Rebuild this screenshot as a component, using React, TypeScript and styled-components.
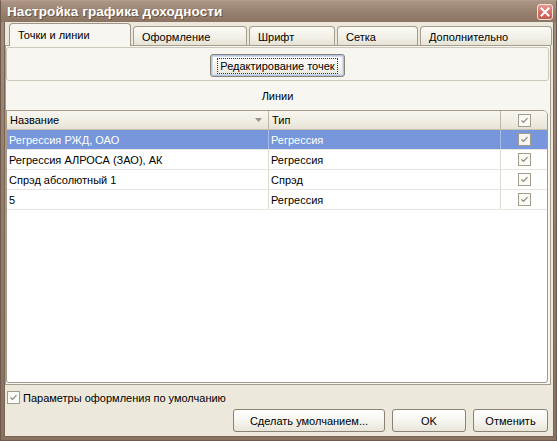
import React from "react";
import styled, { createGlobalStyle, css } from "styled-components";

const Global = createGlobalStyle`
  html, body { margin: 0; padding: 0; background: #ffffff; }
  body { font-family: "Liberation Sans", Arial, sans-serif; font-size: 11px; color: #000; }
  * { box-sizing: border-box; }
`;

const Window = styled.div`
  width: 557px;
  height: 441px;
  display: flex;
  flex-direction: column;
  background: linear-gradient(180deg, #a58d7d 0%, #957d6c 40%, #8a7261 100%);
  border: 1px solid #6e5a4c;
  border-top-color: #b49c8c;
`;

const TitleBar = styled.div`
  height: 21px;
  display: flex;
  align-items: center;
  justify-content: space-between;
  padding: 0 3px 0 6px;
  background: linear-gradient(180deg, #ad9585 0%, #9b8372 45%, #8c7463 100%);
`;

const Title = styled.div`
  font-family: "Liberation Sans", Arial, sans-serif;
  font-weight: bold;
  font-size: 13.5px;
  color: #ffffff;
  text-shadow: 1px 1px 0 #6a5444;
  letter-spacing: 0.1px;
`;

const CloseButton = styled.div`
  width: 16px;
  height: 16px;
  margin-top: 1px;
  border-radius: 3px;
  border: 1px solid #f4e4e0;
  background: linear-gradient(180deg, #e89a92 0%, #d6685e 60%, #c85a50 100%);
  display: flex;
  align-items: center;
  justify-content: center;
`;

const Body = styled.div`
  flex: 1;
  margin: 0 2px 3px 3px;
  background: #ece9dc;
  display: flex;
  flex-direction: column;
  border: 1px solid #7a6555;
  border-top: none;
`;

const TabStrip = styled.div`
  height: 23px;
  display: flex;
  align-items: flex-end;
  padding: 2px 0 0 4px;
  gap: 2px;
  position: relative;
  z-index: 1;
`;

const Tab = styled.div<{ $w: number; $active?: boolean }>`
  width: ${(p) => p.$w}px;
  height: 19px;
  padding: 4px 0 0 8px;
  border: 1px solid #a49c8c;
  border-bottom: none;
  border-radius: 4px 4px 0 0;
  background: linear-gradient(180deg, #fbfaf6 0%, #f1efe6 60%, #e6e2d4 100%);
  color: #000;
  ${(p) =>
    p.$active &&
    css`
      height: 23px;
      margin-bottom: -1px;
      padding-top: 5px;
      background: #f7f6f1;
      border-color: #9e9686;
    `}
`;

const Panel = styled.div`
  height: 340px;
  margin: 0 2px 0 0;
  border: 1px solid #a49c8c;
  background: #f7f6f1;
  display: flex;
  flex-direction: column;
  padding: 1px 1px 1px 0;
`;

const TopBox = styled.div`
  height: 34px;
  border: 1px solid #cbc7bb;
  border-radius: 3px;
  background: #f6f5f0;
  display: flex;
  justify-content: center;
  padding-top: 6px;
`;

const Button = styled.div<{ $w: number; $focus?: boolean }>`
  width: ${(p) => p.$w}px;
  height: 23px;
  border: 1px solid #8b8273;
  border-radius: 3px;
  background: linear-gradient(180deg, #ffffff 0%, #f6f5f0 50%, #e8e5d9 100%);
  display: flex;
  align-items: center;
  justify-content: center;
  color: #000;
  ${(p) =>
    p.$focus &&
    css`
      box-shadow: inset 0 0 0 1px #b0c4e6, inset 0 0 0 2px #d0dcf0;
    `}
`;

const FocusText = styled.span`
  outline: 1px dotted #333;
  outline-offset: 1px;
  padding: 0 1px;
`;

const SectionLabel = styled.div`
  height: 29px;
  display: flex;
  align-items: center;
  justify-content: center;
  padding-top: 1px;
`;

const Grid = styled.div`
  flex: 1;
  margin-right: 1px;
  border: 1px solid #a5998a;
  border-radius: 0 5px 3px 3px;
  background: #ffffff;
  overflow: hidden;
`;

const Row = styled.div<{ $header?: boolean; $selected?: boolean }>`
  display: grid;
  grid-template-columns: 262px 232px 1fr;
  height: 20px;
  border-bottom: 1px solid #e6e4dc;
  ${(p) =>
    p.$header &&
    css`
      height: 19px;
      background: linear-gradient(180deg, #f8f6ef 0%, #efece2 60%, #e6e2d5 100%);
      border-bottom: 1px solid #c8c1b0;
    `}
  ${(p) =>
    p.$selected &&
    css`
      background: #7896dc;
      color: #ffffff;
    `}
`;

const Cell = styled.div<{ $header?: boolean; $selected?: boolean; $center?: boolean; $last?: boolean }>`
  display: flex;
  align-items: center;
  padding-left: ${(p) => (p.$header ? 3 : 2)}px;
  border-right: ${(p) => (p.$last ? "none" : `1px solid ${p.$header ? "#bdb5a4" : p.$selected ? "#a9bbe8" : "#dcd9cf"}`)};
  white-space: nowrap;
  overflow: hidden;
  ${(p) =>
    p.$center &&
    css`
      justify-content: center;
      padding-left: 0;
    `}
`;

const HeaderLabel = styled.span`
  flex: 1;
`;

const SortArrow = styled.svg`
  width: 7px;
  height: 4px;
  margin-right: 6px;
`;

const CheckSvg = styled.svg`
  width: 13px;
  height: 13px;
  display: block;
`;

const Footer = styled.div`
  display: flex;
  flex-direction: column;
  padding: 6px 5px 0 2px;
`;

const CheckRow = styled.div`
  height: 13px;
  display: flex;
  align-items: center;
  gap: 3px;
`;

const ButtonRow = styled.div`
  display: flex;
  justify-content: flex-end;
  margin-top: 5px;
  gap: 7px;
`;

const Check: React.FC<{ selected?: boolean }> = ({ selected }) => (
  <CheckSvg viewBox="0 0 13 13">
    <rect x="0.5" y="0.5" width="12" height="12" fill={selected ? "#f4f4f0" : "#fbfbf8"} stroke="#a39c8c" />
    <path d="M3.5 6.5 L5.5 8.5 L9.5 4.2" fill="none" stroke="#8c877c" strokeWidth="1.2" />
  </CheckSvg>
);

const rows = [
  { name: "Регрессия РЖД, ОАО", type: "Регрессия", selected: true },
  { name: "Регрессия АЛРОСА (ЗАО), АК", type: "Регрессия" },
  { name: "Спрэд абсолютный 1", type: "Спрэд" },
  { name: "5", type: "Регрессия" },
];

const tabs = [
  { label: "Точки и линии", w: 122, active: true },
  { label: "Оформление", w: 114 },
  { label: "Шрифт", w: 86 },
  { label: "Сетка", w: 81 },
  { label: "Дополнительно", w: 132 },
];

export default function App() {
  return (
    <>
      <Global />
      <Window>
        <TitleBar>
          <Title>Настройка графика доходности</Title>
          <CloseButton>
            <svg width="10" height="10" viewBox="0 0 10 10">
              <path d="M1.5 1.5 L8.5 8.5 M8.5 1.5 L1.5 8.5" stroke="#ffffff" strokeWidth="2" strokeLinecap="square" />
            </svg>
          </CloseButton>
        </TitleBar>
        <Body>
          <TabStrip>
            {tabs.map((t) => (
              <Tab key={t.label} $w={t.w} $active={t.active}>
                {t.label}
              </Tab>
            ))}
          </TabStrip>
          <Panel>
            <TopBox>
              <Button $w={135} $focus>
                <FocusText>Редактирование точек</FocusText>
              </Button>
            </TopBox>
            <SectionLabel>Линии</SectionLabel>
            <Grid>
              <Row $header>
                <Cell $header>
                  <HeaderLabel>Название</HeaderLabel>
                  <SortArrow viewBox="0 0 7 4">
                    <path d="M0 0 L7 0 L3.5 4 Z" fill="#9a958a" />
                  </SortArrow>
                </Cell>
                <Cell $header>Тип</Cell>
                <Cell $header $center $last>
                  <Check />
                </Cell>
              </Row>
              {rows.map((r) => (
                <Row key={r.name} $selected={r.selected}>
                  <Cell $selected={r.selected}>{r.name}</Cell>
                  <Cell $selected={r.selected}>{r.type}</Cell>
                  <Cell $center $last>
                    <Check selected={r.selected} />
                  </Cell>
                </Row>
              ))}
            </Grid>
          </Panel>
          <Footer>
            <CheckRow>
              <Check />
              <span>Параметры оформления по умолчанию</span>
            </CheckRow>
            <ButtonRow>
              <Button $w={152}>Сделать умолчанием...</Button>
              <Button $w={74}>OK</Button>
              <Button $w={75}>Отменить</Button>
            </ButtonRow>
          </Footer>
        </Body>
      </Window>
    </>
  );
}
